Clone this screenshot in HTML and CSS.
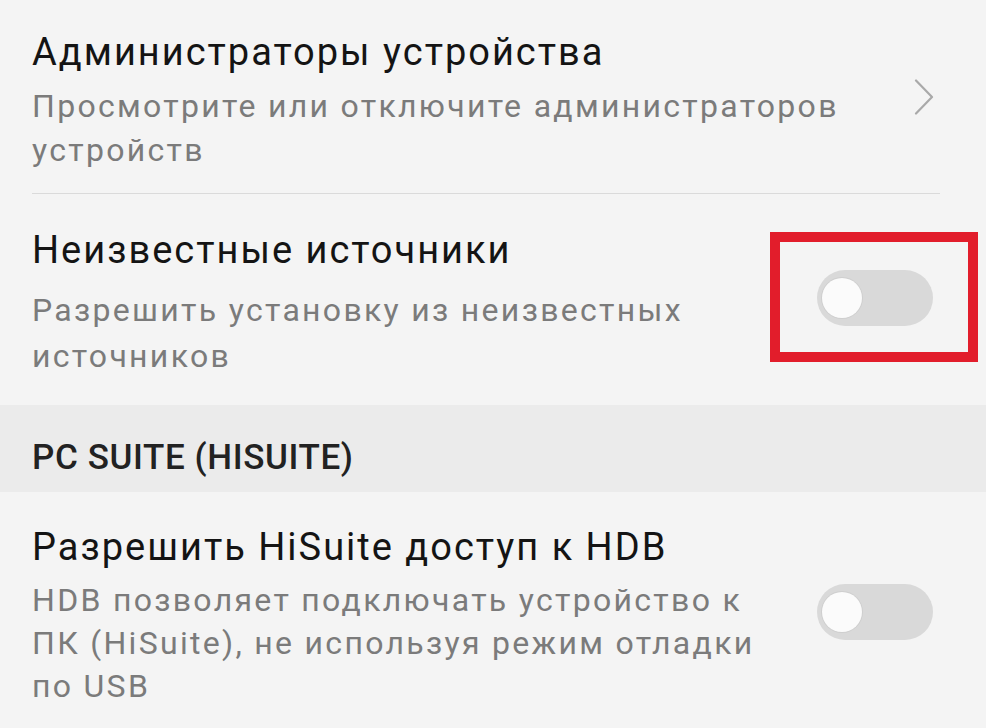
FILE: index.html
```html
<!DOCTYPE html>
<html lang="ru">
<head>
<meta charset="utf-8">
<title>Настройки безопасности</title>
<link rel="stylesheet" href="styles.css">
</head>
<body>
<div class="screen">
  <div class="item item-admin">
    <div class="text">
      <div class="title">Администраторы устройства</div>
      <div class="sub">Просмотрите или отключите администраторов устройств</div>
    </div>
    <svg class="chevron" width="20" height="36" viewBox="0 0 20 36"><path d="M2 1.5 L18 18 L2 34.5" fill="none" stroke="#a9a9a9" stroke-width="2.2" stroke-linecap="round" stroke-linejoin="round"/></svg>
  </div>
  <div class="item item-unknown">
    <div class="text">
      <div class="title">Неизвестные источники</div>
      <div class="sub">Разрешить установку из неизвестных источников</div>
    </div>
    <div class="switch">
      <div class="knob"></div>
      <div class="highlight"></div>
    </div>
  </div>
  <div class="section">PC SUITE (HISUITE)</div>
  <div class="item item-hdb">
    <div class="text">
      <div class="title">Разрешить HiSuite доступ к HDB</div>
      <div class="sub">HDB позволяет подключать устройство к ПК (HiSuite), не используя режим отладки по USB</div>
    </div>
    <div class="switch">
      <div class="knob"></div>
    </div>
  </div>
</div>
</body>
</html>
```
FILE: styles.css
```css
html, body {
  margin: 0;
  padding: 0;
  background: #f4f4f4;
}
.screen {
  width: 986px;
  height: 728px;
  overflow: hidden;
  font-family: Roboto, "Noto Sans", sans-serif;
  background: #f4f4f4;
}
.item {
  display: flex;
  align-items: center;
  margin: 0 46px 0 32px;
}
.text {
  flex: 1;
  min-width: 0;
}
.title {
  font-size: 38px;
  line-height: 44px;
  letter-spacing: 2px;
  color: #141414;
  margin-bottom: 10px;
}
.sub {
  font-size: 32px;
  line-height: 44px;
  letter-spacing: 2.3px;
  color: #7b7b7b;
  padding-right: 100px;
}
.item-admin {
  padding: 30px 0 21px;
  border-bottom: 1px solid #dadada;
}
.item-admin .sub {
  padding-right: 60px;
}
.item-admin .chevron {
  margin-bottom: 8px;
}
.item-unknown {
  padding: 34px 0 26px;
}
.item-unknown .title {
  margin-bottom: 15px;
}
.item-unknown .sub {
  line-height: 46px;
}
.item-unknown .switch {
  margin-bottom: 11px;
}
.item-hdb {
  padding: 33px 0 20px;
}
.item-hdb .sub {
  line-height: 43px;
  padding-right: 40px;
}
.item-hdb .switch {
  margin-bottom: 9px;
}
.chevron {
  flex: none;
  margin-right: 6px;
}
.section {
  background: #ebebeb;
  padding: 31px 32px 12px;
  font-size: 35px;
  line-height: 44px;
  letter-spacing: 0.6px;
  font-weight: 500;
  color: #222;
}
.switch {
  flex: none;
  position: relative;
  width: 116px;
  height: 56px;
  border-radius: 28px;
  background: #d9d9d9;
  margin-right: 7px;
}
.knob {
  position: absolute;
  left: 5px;
  top: 8px;
  width: 40px;
  height: 40px;
  border-radius: 50%;
  background: #fbfbfb;
  box-shadow: 0 0 0 1px #cfcfcf;
}
.highlight {
  position: absolute;
  left: -47px;
  top: -38px;
  width: 188px;
  height: 110px;
  border: 10px solid #e21d2b;
}
```
